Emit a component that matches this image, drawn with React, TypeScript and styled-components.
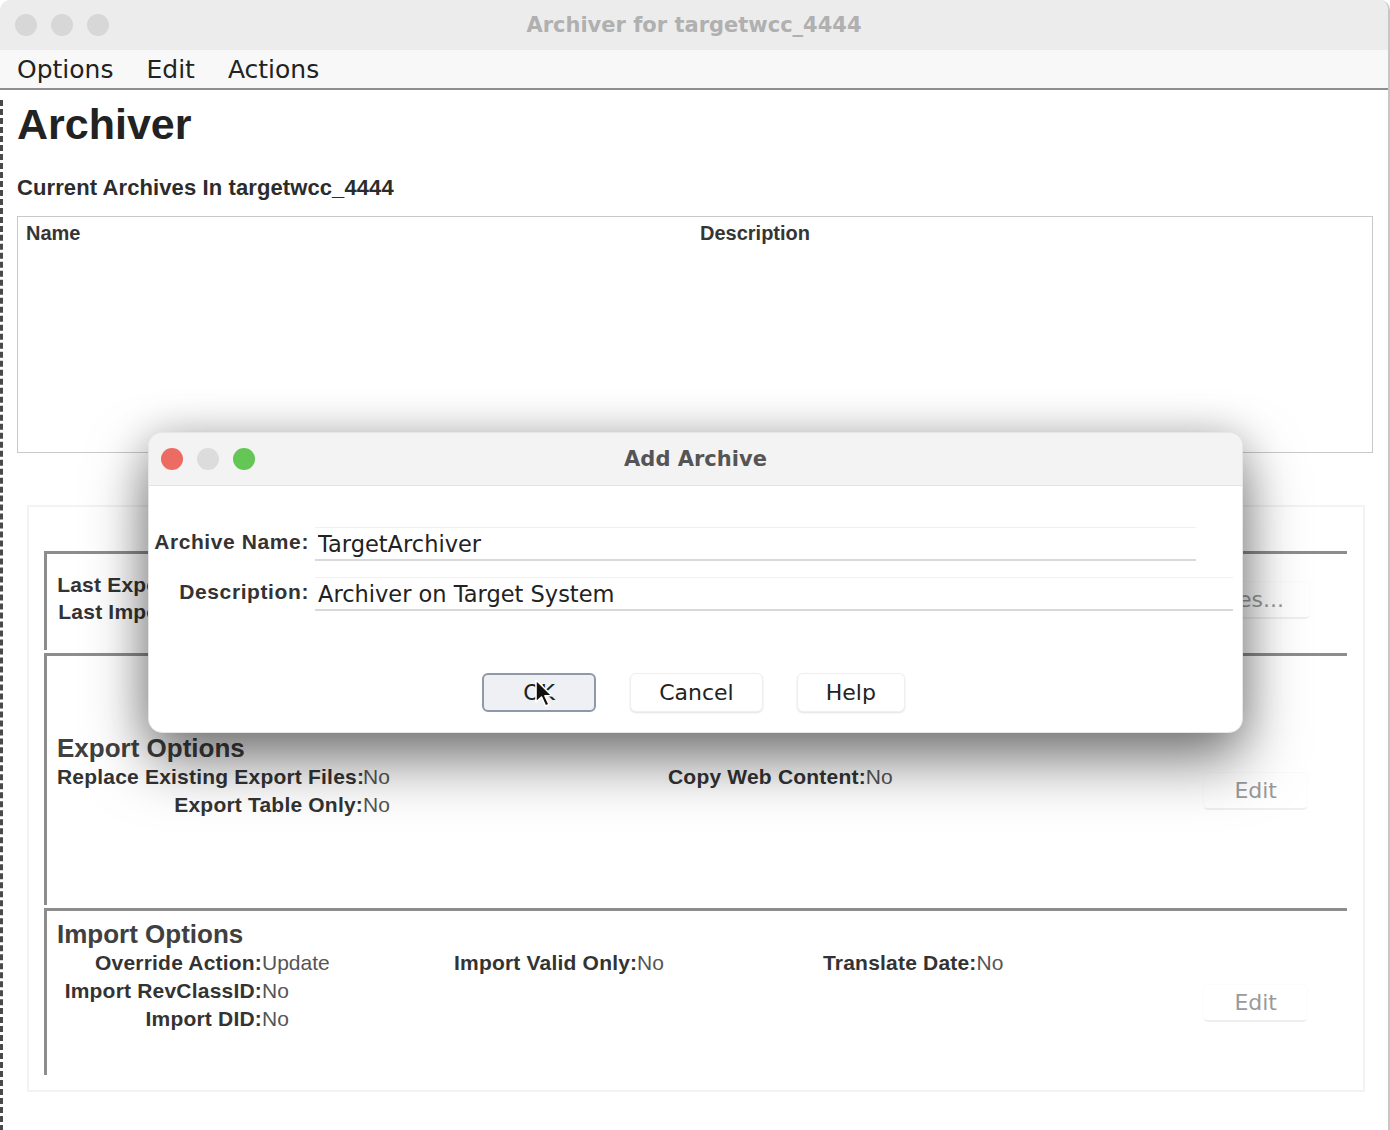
import React from 'react';
import styled, { createGlobalStyle } from 'styled-components';

const GlobalStyle = createGlobalStyle`
  html, body { margin: 0; padding: 0; background: #ffffff; }
  body {
    width: 1390px;
    height: 1130px;
    overflow: hidden;
    font-family: "Liberation Sans", Arial, sans-serif;
  }
  * { box-sizing: border-box; }
`;

const Window = styled.div`
  position: relative;
  width: 1390px;
  height: 1130px;
  background: #ffffff;
  border-right: 2px solid #c6c6c6;
  border-top-left-radius: 10px;
  border-top-right-radius: 10px;
  overflow: hidden;
`;

const TitleBar = styled.div`
  height: 50px;
  background: #ececec;
  display: grid;
  grid-template-columns: 1fr auto 1fr;
  align-items: center;
`;

const Lights = styled.div<{ $left: number }>`
  display: flex;
  gap: 14px;
  padding-left: ${(p) => p.$left}px;
`;

const Light = styled.span<{ $color: string }>`
  width: 22px;
  height: 22px;
  border-radius: 50%;
  background: ${(p) => p.$color};
`;

const WindowTitle = styled.div<{ $color: string }>`
  font-family: "DejaVu Sans", "Liberation Sans", sans-serif;
  font-weight: 700;
  font-size: 21px;
  color: ${(p) => p.$color};
  white-space: nowrap;
`;

const MenuBar = styled.div`
  height: 40px;
  background: #f8f8f8;
  border-bottom: 2px solid #8e8e8e;
  display: flex;
  align-items: center;
  gap: 33px;
  padding-left: 17px;
  font-family: "DejaVu Sans", "Liberation Sans", sans-serif;
  font-size: 25px;
  color: #222;
`;

const MenuItem = styled.span``;

const Body = styled.div`
  border-left: 3px dashed #4a4a4a;
  height: 1040px;
  padding: 0 15px 0 14px;
`;

const PageHeading = styled.h1`
  margin: 10px 0 0;
  font-size: 43px;
  line-height: 48px;
  font-weight: 700;
  color: #222;
`;

const SubHeading = styled.h2`
  margin: 27px 0 0;
  font-size: 22px;
  line-height: 26px;
  font-weight: 700;
  letter-spacing: 0.1px;
  color: #2c2c2c;
`;

const TableBox = styled.div`
  margin-top: 15px;
  height: 237px;
  border: 1px solid #c9c9c9;
`;

const TableHeader = styled.div`
  display: grid;
  grid-template-columns: 674px 1fr;
  padding: 6px 8px;
  font-size: 20px;
  line-height: 20px;
  font-weight: 700;
  color: #353535;
`;

const LowerPanel = styled.div`
  margin: 52px 8px 0 10px;
  border: 2px solid #f3f3f3;
  padding: 44px 16px 15px 15px;
`;

const Section = styled.div<{ $height: number }>`
  height: ${(p) => p.$height}px;
  border-top: 3px solid #8d8d8d;
  border-left: 3px solid #8d8d8d;
  margin-bottom: 3px;
  display: flex;
  padding-left: 10px;
  &:last-child { margin-bottom: 0; }
`;

const SectionMain = styled.div<{ $top: number }>`
  flex: 1;
  padding-top: ${(p) => p.$top}px;
`;

const SectionTitle = styled.div`
  font-size: 26px;
  line-height: 30px;
  font-weight: 700;
  color: #404040;
`;

const FieldGrid = styled.div<{ $cols: string; $row: number }>`
  display: grid;
  grid-template-columns: ${(p) => p.$cols};
  grid-auto-rows: ${(p) => p.$row}px;
  justify-content: start;
  align-items: center;
  font-size: 21px;
`;

const Label = styled.span<{ $align?: string }>`
  font-weight: 700;
  color: #333;
  letter-spacing: 0.2px;
  white-space: nowrap;
  text-align: ${(p) => p.$align || 'right'};
`;

const Value = styled.span`
  color: #555;
  white-space: nowrap;
`;

const Empty = styled.span``;

const SideSlot = styled.div<{ $offset: number; $right: number }>`
  align-self: center;
  margin-top: ${(p) => p.$offset}px;
  margin-right: ${(p) => p.$right}px;
`;

const GhostButton = styled.div<{ $pad: number }>`
  height: 38px;
  display: flex;
  align-items: center;
  justify-content: center;
  padding: 0 ${(p) => p.$pad}px;
  border: 1px solid #fbfbfb;
  border-bottom: 2px solid #efefef;
  border-radius: 5px;
  font-family: "DejaVu Sans", "Liberation Sans", sans-serif;
  font-size: 22px;
  color: #9a9a9a;
  white-space: nowrap;
`;

const Dialog = styled.div`
  position: absolute;
  left: 148px;
  top: 432px;
  width: 1095px;
  height: 301px;
  background: #ffffff;
  border-radius: 14px;
  overflow: hidden;
  border: 1px solid #e6e6e6;
  box-shadow: 0 28px 60px rgba(0, 0, 0, 0.5), 0 0 40px rgba(0, 0, 0, 0.18);
`;

const DialogTitleBar = styled(TitleBar)`
  height: 53px;
  background: #f4f3f3;
  border-bottom: 1px solid #e3e3e3;
`;

const DialogBody = styled.div`
  padding-top: 41px;
`;

const Form = styled.div`
  display: grid;
  grid-template-columns: 160px 1fr;
  column-gap: 6px;
  row-gap: 16px;
  align-items: center;
`;

const FormLabel = styled.label`
  text-align: right;
  font-size: 21px;
  font-weight: 700;
  letter-spacing: 0.6px;
  color: #333;
  margin-bottom: 4px;
  white-space: nowrap;
`;

const TextField = styled.input<{ $width: number }>`
  width: ${(p) => p.$width}px;
  height: 34px;
  border: none;
  border-top: 1px solid #f0f0f0;
  border-bottom: 2px solid #d9d9d9;
  padding: 0 3px;
  font-family: "DejaVu Sans", "Liberation Sans", sans-serif;
  font-size: 22.5px;
  color: #222;
  background: #fff;
  outline: none;
`;

const ButtonRow = styled.div`
  margin-top: 62px;
  display: flex;
  justify-content: center;
  gap: 34px;
  padding-right: 4px;
`;

const DialogButton = styled.button<{ $primary?: boolean }>`
  position: relative;
  height: 39px;
  min-width: ${(p) => (p.$primary ? 114 : 0)}px;
  padding: 0 28px;
  border-radius: 6px;
  font-family: "DejaVu Sans", "Liberation Sans", sans-serif;
  font-size: 22px;
  color: #222;
  background: ${(p) => (p.$primary ? '#eef0f3' : '#ffffff')};
  border: ${(p) => (p.$primary ? '2px solid #8e98a9' : '1px solid #efefef')};
  box-shadow: ${(p) => (p.$primary ? 'none' : '0 1px 2px rgba(0,0,0,0.12)')};
`;

const Cursor = styled.svg`
  position: absolute;
  left: 50px;
  top: 4px;
`;

export default function App() {
  return (
    <>
      <GlobalStyle />
      <Window>
        <TitleBar>
          <Lights $left={15}>
            <Light $color="#d7d7d7" />
            <Light $color="#d7d7d7" />
            <Light $color="#d7d7d7" />
          </Lights>
          <WindowTitle $color="#b0b0b0">Archiver for targetwcc_4444</WindowTitle>
          <span />
        </TitleBar>
        <MenuBar>
          <MenuItem>Options</MenuItem>
          <MenuItem>Edit</MenuItem>
          <MenuItem>Actions</MenuItem>
        </MenuBar>
        <Body>
          <PageHeading>Archiver</PageHeading>
          <SubHeading>Current Archives In targetwcc_4444</SubHeading>
          <TableBox>
            <TableHeader>
              <span>Name</span>
              <span>Description</span>
            </TableHeader>
          </TableBox>
          <LowerPanel>
            <Section $height={99}>
              <SectionMain $top={17}>
                <FieldGrid $cols="150px max-content" $row={27}>
                  <Label>Last Exported:</Label>
                  <Value />
                  <Label>Last Imported:</Label>
                  <Value />
                </FieldGrid>
              </SectionMain>
              <SideSlot $offset={-4} $right={37}>
                <GhostButton $pad={25}>View Batch Files...</GhostButton>
              </SideSlot>
            </Section>
            <Section $height={252}>
              <SectionMain $top={77}>
                <SectionTitle>Export Options</SectionTitle>
                <FieldGrid $cols="306px 305px max-content max-content" $row={28}>
                  <Label>Replace Existing Export Files:</Label>
                  <Value>No</Value>
                  <Label $align="left">Copy Web Content:</Label>
                  <Value>No</Value>
                  <Label>Export Table Only:</Label>
                  <Value>No</Value>
                  <Empty />
                  <Empty />
                </FieldGrid>
              </SectionMain>
              <SideSlot $offset={20} $right={39}>
                <GhostButton $pad={30}>Edit</GhostButton>
              </SideSlot>
            </Section>
            <Section $height={167}>
              <SectionMain $top={8}>
                <SectionTitle>Import Options</SectionTitle>
                <FieldGrid
                  $cols="205px 192px 183px 186px max-content max-content"
                  $row={28}
                >
                  <Label>Override Action:</Label>
                  <Value>Update</Value>
                  <Label $align="left">Import Valid Only:</Label>
                  <Value>No</Value>
                  <Label $align="left">Translate Date:</Label>
                  <Value>No</Value>
                  <Label>Import RevClassID:</Label>
                  <Value>No</Value>
                  <Empty />
                  <Empty />
                  <Empty />
                  <Empty />
                  <Label>Import DID:</Label>
                  <Value>No</Value>
                </FieldGrid>
              </SectionMain>
              <SideSlot $offset={20} $right={39}>
                <GhostButton $pad={30}>Edit</GhostButton>
              </SideSlot>
            </Section>
          </LowerPanel>
        </Body>

        <Dialog>
          <DialogTitleBar>
            <Lights $left={12}>
              <Light $color="#ec6b62" />
              <Light $color="#dcdcdc" />
              <Light $color="#63c655" />
            </Lights>
            <WindowTitle $color="#555555">Add Archive</WindowTitle>
            <span />
          </DialogTitleBar>
          <DialogBody>
            <Form>
              <FormLabel>Archive Name:</FormLabel>
              <TextField $width={881} readOnly value="TargetArchiver" />
              <FormLabel>Description:</FormLabel>
              <TextField $width={918} readOnly value="Archiver on Target System" />
            </Form>
            <ButtonRow>
              <DialogButton $primary>
                OK
                <Cursor width="22" height="30" viewBox="0 0 22 30">
                  <path
                    d="M2 1 L2 23 L7.5 18 L11.5 27 L15 25.5 L11 16.8 L18 16.8 Z"
                    fill="#111"
                    stroke="#fff"
                    strokeWidth="1.6"
                    strokeLinejoin="round"
                  />
                </Cursor>
              </DialogButton>
              <DialogButton>Cancel</DialogButton>
              <DialogButton>Help</DialogButton>
            </ButtonRow>
          </DialogBody>
        </Dialog>
      </Window>
    </>
  );
}
